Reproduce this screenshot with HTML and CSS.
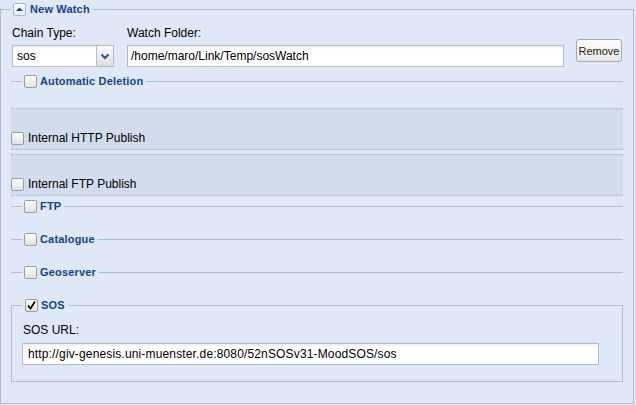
FILE: index.html
```html
<!DOCTYPE html>
<html>
<head>
<meta charset="utf-8">
<link rel="stylesheet" href="styles.css">
</head>
<body>
<fieldset class="fs main">
  <legend class="lg lg-main"><span class="lg-in"><span class="tool"><svg width="11" height="11" viewBox="0 0 11 11"><polygon points="2,7 5.5,3.5 9,7" fill="#15428b"/></svg></span><span class="lgt">New Watch</span></span></legend>
  <div class="row1">
    <div class="col col-type">
      <div class="lbl">Chain Type:</div>
      <div class="combo"><span class="combo-val">sos</span><span class="trigger"><svg width="16" height="20" viewBox="0 0 16 20"><polyline points="4.5,8.5 8,12 11.5,8.5" fill="none" stroke="#2d4f8f" stroke-width="2"/></svg></span></div>
    </div>
    <div class="col col-folder">
      <div class="lbl">Watch Folder:</div>
      <div class="text">/home/maro/Link/Temp/sosWatch</div>
    </div>
    <button class="btn">Remove</button>
  </div>
  <fieldset class="fs collapsed first-col">
    <legend class="lg"><span class="lg-in"><span class="cb"></span><span class="lgt">Automatic Deletion</span></span></legend>
  </fieldset>
  <div class="pub pub-first"><span class="cb"></span><span class="pub-t">Internal HTTP Publish</span></div>
  <div class="pub"><span class="cb"></span><span class="pub-t">Internal FTP Publish</span></div>
  <fieldset class="fs collapsed after-pub">
    <legend class="lg"><span class="lg-in"><span class="cb"></span><span class="lgt">FTP</span></span></legend>
  </fieldset>
  <fieldset class="fs collapsed">
    <legend class="lg"><span class="lg-in"><span class="cb"></span><span class="lgt">Catalogue</span></span></legend>
  </fieldset>
  <fieldset class="fs collapsed">
    <legend class="lg"><span class="lg-in"><span class="cb"></span><span class="lgt">Geoserver</span></span></legend>
  </fieldset>
  <fieldset class="fs sos">
    <legend class="lg lg-sos"><span class="lg-in"><span class="cb checked"><svg width="11" height="11" viewBox="0 0 11 11"><polyline points="2,5.5 4.5,8.5 9,1.5" fill="none" stroke="#000" stroke-width="1.8"/></svg></span><span class="lgt">SOS</span></span></legend>
    <div class="lbl sos-lbl">SOS URL:</div>
    <div class="text sos-url">http://giv-genesis.uni-muenster.de:8080/52nSOSv31-MoodSOS/sos</div>
  </fieldset>
</fieldset>
</body>
</html>
```

FILE: styles.css
```css
* { box-sizing: border-box; }
body {
  margin: 0;
  background: #dfe8f6;
  font-family: "Liberation Sans", Arial, sans-serif;
  font-size: 12px;
  color: #000;
}
.fs {
  margin: 0;
  min-width: 0;
  border: 1px solid #b5b8c8;
}
.main {
  width: 634px;
  margin-top: 2px;
  padding: 10px 10px 21px 10px;
}
.lg {
  margin: 0;
  padding: 0 3px 0 2px;
  height: 13px;
  line-height: 13px;
}
.lg-main { height: 14px; line-height: 14px; }
.lg-in {
  display: flex;
  align-items: center;
  height: 100%;
}
.lgt {
  font-weight: bold;
  font-size: 11px;
  color: #15428b;
  margin-left: 3px;
  letter-spacing: 0.17px;
}
.tool {
  width: 13px;
  height: 13px;
  border: 1px solid #99bbe8;
  border-radius: 2px;
  background: linear-gradient(#ffffff, #e4ecf8);
  display: flex;
  align-items: center;
  justify-content: center;
}
.lg-main .lgt { margin-left: 4px; }
.row1 {
  display: flex;
  align-items: flex-start;
  padding-left: 1px;
}
.col { display: flex; flex-direction: column; }
.col-type { width: 102px; }
.col-folder { width: 437px; margin-left: 13px; }
.lbl {
  height: 14px;
  line-height: 14px;
  margin-bottom: 5px;
}
.combo, .text {
  height: 22px;
  border: 1px solid #b5b8c8;
  background: linear-gradient(#eeeeee, #ffffff 3px, #ffffff);
  display: flex;
  align-items: center;
}
.combo-val { flex: 1; padding-left: 4px; }
.text { padding-left: 3px; }
.trigger {
  width: 17px;
  height: 20px;
  border-left: 1px solid #b5b8c8;
  background: linear-gradient(#fbfbfb, #dedede);
  display: flex;
  align-items: center;
  justify-content: center;
}
.btn {
  margin: 13px 0 0 12px;
  width: 46px;
  height: 23px;
  padding: 0;
  font-family: "Liberation Sans", Arial, sans-serif;
  font-size: 11px;
  color: #222;
  border: 1px solid #a6a6a6;
  border-radius: 3px;
  background: linear-gradient(#fefefe, #e6e6e6);
}
.cb {
  width: 13px;
  height: 13px;
  border: 1px solid #9c9c9c;
  border-radius: 2px;
  background: linear-gradient(#fdfdfd, #e2e2e2);
  display: flex;
  align-items: center;
  justify-content: center;
  flex: none;
}
.collapsed {
  border-width: 1px 0 0 0;
  padding: 0 0 0 11px;
  margin-bottom: 20px;
}
.first-col { margin-top: 8px; }
.pub {
  height: 42px;
  border-top: 1px dotted #a3afc3;
  border-bottom: 1px dotted #a3afc3;
  background: #d1dcee;
  display: flex;
  align-items: center;
  padding-top: 22px;
  padding-bottom: 4px;
}
.pub-first { margin-bottom: 4px; }
.pub-t { margin-left: 4px; line-height: 14px; }
.after-pub { margin-top: 4px; }
.sos {
  padding: 11px 10px 16px 10px;
}
.lg-sos { padding-left: 3px; }
.sos-lbl { margin-left: 1px; margin-bottom: 6px; }
.sos-url { width: 577px; padding-left: 5px; letter-spacing: 0.15px; }
```
